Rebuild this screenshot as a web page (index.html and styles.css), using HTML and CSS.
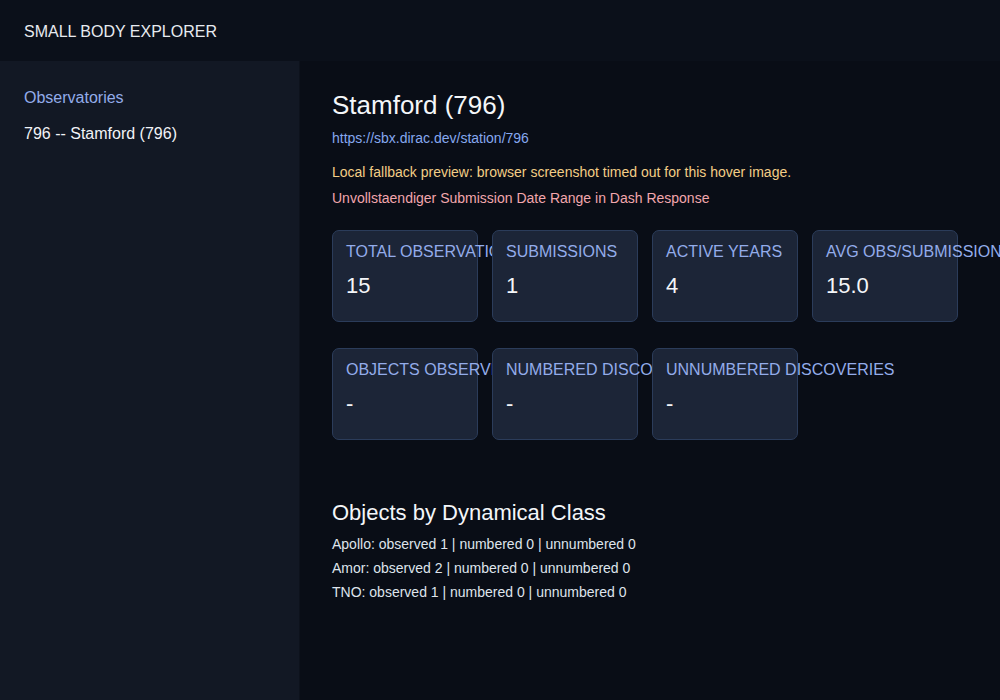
FILE: index.html
```html
<!DOCTYPE html>
<html>

<head>
  <meta charset="UTF-8">
  <meta name="viewport" content="width=device-width, initial-scale=1.0">
  <title>Small Body Explorer</title>
  <link rel="stylesheet" href="styles.css">
</head>

<body>
  <header id="topbar">SMALL BODY EXPLORER</header>
  <div id="layout">
    <nav id="sidebar">
      <div class="nav-title">Observatories</div>
      <div class="nav-item">796 -- Stamford (796)</div>
    </nav>
    <main id="content">
      <h1>Stamford (796)</h1>
      <a class="station-link" href="#">https://sbx.dirac.dev/station/796</a>
      <p class="note warn">Local fallback preview: browser screenshot timed out for this hover image.</p>
      <p class="note error">Unvollstaendiger Submission Date Range in Dash Response</p>

      <div class="stats">
        <div class="card">
          <div class="label">Total Observations</div>
          <div class="value">15</div>
        </div>
        <div class="card">
          <div class="label">Submissions</div>
          <div class="value">1</div>
        </div>
        <div class="card">
          <div class="label">Active Years</div>
          <div class="value">4</div>
        </div>
        <div class="card">
          <div class="label">Avg Obs/Submission</div>
          <div class="value">15.0</div>
        </div>
      </div>

      <div class="stats">
        <div class="card">
          <div class="label">Objects Observed</div>
          <div class="value">-</div>
        </div>
        <div class="card">
          <div class="label">Numbered Discoveries</div>
          <div class="value">-</div>
        </div>
        <div class="card">
          <div class="label">Unnumbered Discoveries</div>
          <div class="value">-</div>
        </div>
      </div>

      <h2>Objects by Dynamical Class</h2>
      <ul class="classes">
        <li>Apollo: observed 1 | numbered 0 | unnumbered 0</li>
        <li>Amor: observed 2 | numbered 0 | unnumbered 0</li>
        <li>TNO: observed 1 | numbered 0 | unnumbered 0</li>
      </ul>
    </main>
  </div>
</body>

</html>
```

FILE: styles.css
```css
body {
  font-family: 'Liberation Sans', Arial, sans-serif;
  margin: 0;
  padding: 0;
  height: 100vh;
  display: flex;
  flex-direction: column;
  background-color: #090d16;
  color: #f1f3f7;
  overflow: hidden;
}

#topbar {
  height: 61px;
  box-sizing: border-box;
  padding: 2px 24px 0;
  display: flex;
  align-items: center;
  font-size: 16px;
  color: #e8ebf0;
  background-color: #0b101a;
  flex-shrink: 0;
}

#layout {
  display: flex;
  flex: 1;
}

#sidebar {
  width: 300px;
  flex-shrink: 0;
  padding: 28px 24px;
  box-sizing: border-box;
  background-color: #121824;
  border-right: 1px solid #0d121c;
}

.nav-title {
  font-size: 16px;
  color: #93acea;
  margin-bottom: 18px;
}

.nav-item {
  font-size: 16px;
  color: #f1f3f7;
}

#content {
  flex: 1;
  padding: 29px 32px;
}

h1 {
  font-size: 26px;
  font-weight: normal;
  margin: 0 0 9px;
  color: #f4f6f9;
}

.station-link {
  display: block;
  font-size: 14px;
  color: #86a8ef;
  text-decoration: none;
  margin-bottom: 18px;
}

.note {
  font-size: 14px;
  margin: 0 0 9px;
}

.warn {
  color: #f3cd86;
  margin-bottom: 10px;
}

.error {
  color: #f2a6ad;
}

.stats {
  display: flex;
  gap: 14px;
  margin-top: 24px;
}

.stats + .stats {
  margin-top: 26px;
}

.card {
  width: 146px;
  height: 92px;
  box-sizing: border-box;
  padding: 12px 13px;
  background-color: #1c2537;
  border: 1px solid #2b3c5a;
  border-radius: 7px;
}

.label {
  font-size: 16px;
  text-transform: uppercase;
  white-space: nowrap;
  color: #93acea;
  margin-bottom: 12px;
}

.value {
  font-size: 22px;
  color: #f4f6f9;
}

h2 {
  font-size: 22px;
  font-weight: normal;
  margin: 60px 0 6px;
  color: #f4f6f9;
}

.classes {
  list-style: none;
  margin: 0;
  padding: 0;
  font-size: 14px;
  color: #dfe4ec;
}

.classes li {
  line-height: 24px;
}
```
